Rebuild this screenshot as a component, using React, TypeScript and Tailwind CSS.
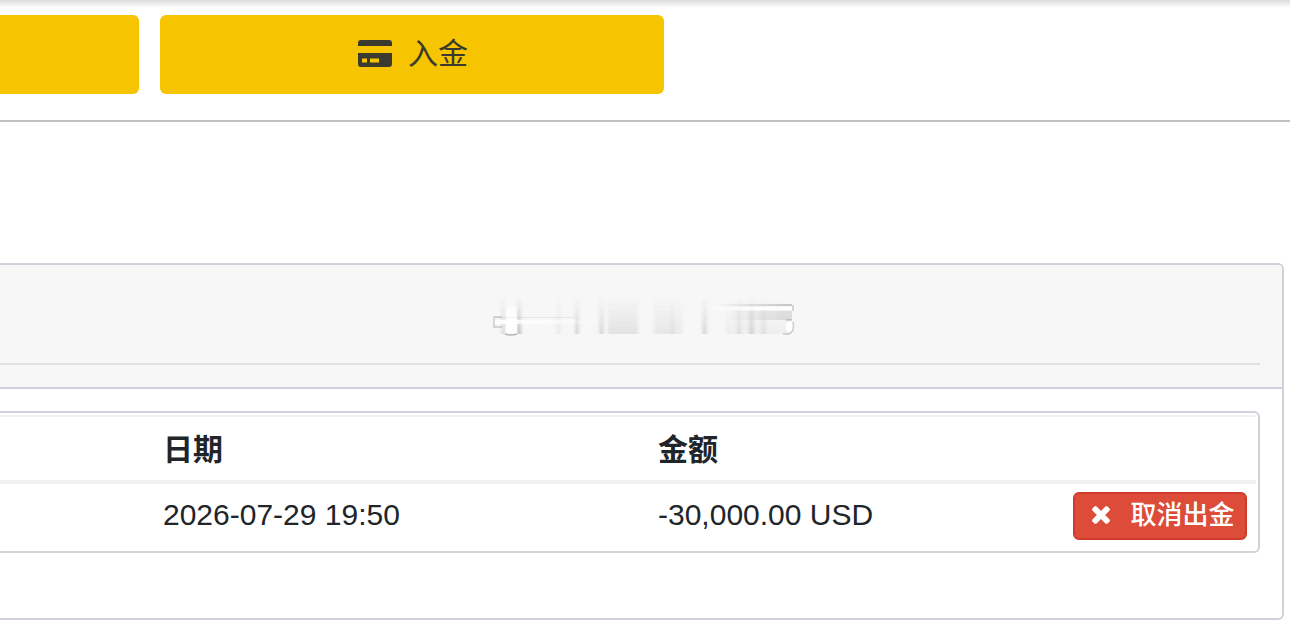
const smudges = [
  { x: 13, w: 4, o: 0.18 },
  { x: 29, w: 4, o: 0.34 },
  { x: 68, w: 5, o: 0.07 },
  { x: 87, w: 4, o: 0.22 },
  { x: 111, w: 5, o: 0.18 },
  { x: 120, w: 30, o: 0.13 },
  { x: 166, w: 20, o: 0.1 },
  { x: 183, w: 11, o: 0.08 },
  { x: 214, w: 5, o: 0.18 },
  { x: 238, w: 62, o: 0.05 },
  { x: 249, w: 4, o: 0.12 },
  { x: 261, w: 5, o: 0.18 },
  { x: 273, w: 5, o: 0.1 },
];

function CardIcon() {
  return (
    <svg className="h-[27px] w-[34px]" viewBox="0 0 34 27" fill="#3b3a2e" aria-hidden="true">
      <path d="M3 0h28a3 3 0 0 1 3 3v3H0V3a3 3 0 0 1 3-3z" />
      <path
        fillRule="evenodd"
        d="M0 13h34v11a3 3 0 0 1-3 3H3a3 3 0 0 1-3-3zM4 18.5v4h5v-4zM12 18.5v4h9v-4z"
      />
    </svg>
  );
}

function CloseIcon() {
  return (
    <svg className="h-[18px] w-[18px]" viewBox="110 366 1188 1188" fill="currentColor" aria-hidden="true">
      <path d="M1298 1322q0 40-28 68l-136 136q-28 28-68 28t-68-28l-294-294-294 294q-28 28-68 28t-68-28l-136-136q-28-28-28-68t28-68l294-294-294-294q-28-28-28-68t28-68l136-136q28-28 68-28t68 28l294 294 294-294q28-28 68-28t68 28l136 136q28 28 28 68t-28 68l-294 294 294 294q28 28 28 68z" />
    </svg>
  );
}

function RedactedTitle() {
  return (
    <svg className="h-[44px] w-[310px]" viewBox="0 0 310 44" aria-hidden="true">
      <defs>
        <linearGradient id="fade" x1="0" y1="0" x2="0" y2="1">
          <stop offset="0" stopColor="#555" stopOpacity="0" />
          <stop offset="0.5" stopColor="#555" stopOpacity="0.5" />
          <stop offset="1" stopColor="#555" stopOpacity="1" />
        </linearGradient>
        <linearGradient id="sweep" x1="0" y1="0" x2="1" y2="0">
          <stop offset="0" stopColor="#fff" stopOpacity="1" />
          <stop offset="1" stopColor="#fff" stopOpacity="0" />
        </linearGradient>
        <linearGradient id="trail" x1="0" y1="0" x2="1" y2="0">
          <stop offset="0" stopColor="#555" stopOpacity="0" />
          <stop offset="1" stopColor="#555" stopOpacity="0.3" />
        </linearGradient>
        <linearGradient id="gleam" x1="0" y1="0" x2="1" y2="0">
          <stop offset="0" stopColor="#fff" stopOpacity="0" />
          <stop offset="0.5" stopColor="#fff" stopOpacity="0.8" />
          <stop offset="1" stopColor="#fff" stopOpacity="1" />
        </linearGradient>
        <filter id="soft" x="-5%" y="-10%" width="110%" height="120%">
          <feGaussianBlur stdDeviation="1.4 0.3" />
        </filter>
        <filter id="edge" x="-20%" y="-20%" width="140%" height="140%">
          <feGaussianBlur stdDeviation="0.5" />
        </filter>
      </defs>
      <g filter="url(#soft)">
        {smudges.map((s) => (
          <rect key={s.x} x={s.x} y="2" width={s.w} height="37" fill="url(#fade)" opacity={s.o} />
        ))}
      </g>
      <g filter="url(#edge)">
        <rect x="6" y="22" width="80" height="1" fill="#777" opacity="0.12" />
        <rect x="6" y="25" width="110" height="4" fill="url(#sweep)" />
        <rect x="18" y="12" width="11" height="27" fill="#fff" opacity="0.6" />
        <rect x="18" y="24" width="11" height="14" fill="#fff" />
        <path d="M14 22H6v10h8" fill="none" stroke="#777" strokeOpacity="0.35" strokeWidth="1.5" />
        <path d="M17 39q6 2 12 0" fill="none" stroke="#777" strokeOpacity="0.5" strokeWidth="1.5" />
        <rect x="230" y="9" width="74" height="2" fill="url(#trail)" />
        <rect x="215" y="12" width="89" height="3" fill="url(#gleam)" />
        <rect x="240" y="16" width="64" height="9" fill="url(#trail)" opacity="0.55" />
        <rect x="298" y="27" width="7" height="9" rx="2" fill="#fff" />
        <path d="M305 10v6M304 25h-6M305 27q2 9-4 12h-6" fill="none" stroke="#777" strokeOpacity="0.35" strokeWidth="1.5" />
      </g>
    </svg>
  );
}

export default function App() {
  return (
    <div
      className="min-h-screen overflow-hidden bg-white text-[#212529]"
      style={{ fontFamily: '"Liberation Sans", "Noto Sans CJK SC", sans-serif' }}
    >
      <div className="h-[8px] bg-linear-to-b from-[#dcdce0] to-white" />
      <div className="flex gap-[21px] border-b-2 border-[#c1c1c1] pt-[7px] pb-[26px]">
        <button type="button" aria-label="操作" className="h-[79px] w-[139px] rounded-r-md bg-[#f6c400]" />
        <button
          type="button"
          className="flex h-[79px] w-[504px] items-center justify-center gap-4 rounded-md bg-[#f6c400] pb-[2px] pl-[2px] text-[30px] text-[#3b3a2e]"
        >
          <CardIcon />
          <span>入金</span>
        </button>
      </div>

      <section className="mt-[141px] mr-[6px] overflow-hidden rounded-r-md border-2 border-l-0 border-[#d2d1db]">
        <header className="border-b-2 border-[#d2d1db] bg-[#f7f7f7] pr-[22px] pb-[22px]">
          <div className="flex justify-center border-b-2 border-[#e1e1e1] pt-[30px] pb-[24px] pl-[26px]">
            <RedactedTitle />
          </div>
        </header>
        <div className="pt-[22px] pr-[22px] pb-[65px]">
          <div className="rounded-r-md border-2 border-l-0 border-[#d2d3da] pt-[2px] pr-[2px]">
            <table className="w-full table-fixed border-collapse text-[30px] leading-9">
              <colgroup>
                <col className="w-[153px]" />
                <col className="w-[495px]" />
                <col className="w-[415px]" />
                <col />
              </colgroup>
              <thead>
                <tr className="h-[66px] border-t-2 border-[#f2f2f4] text-left">
                  <td />
                  <th scope="col" className="px-[10px] pt-[3px] font-bold">日期</th>
                  <th scope="col" className="px-[10px] pt-[3px] font-bold">金额</th>
                  <td />
                </tr>
              </thead>
              <tbody>
                <tr className="h-[69px] border-t-4 border-[#f1f1f2]">
                  <td />
                  <td className="px-[10px] pb-[6px]">2026-07-29 19:50</td>
                  <td className="px-[10px] pb-[6px]">-30,000.00 USD</td>
                  <td className="pr-[9px] pb-[3px]">
                    <button
                      type="button"
                      className="ml-auto flex h-12 w-[174px] items-center justify-center gap-5 rounded-md border-2 border-[#cf3a2a] bg-[#dd4b39] pb-[2px] pl-[7px] text-[26px] font-medium whitespace-nowrap text-white"
                    >
                      <CloseIcon />
                      <span>取消出金</span>
                    </button>
                  </td>
                </tr>
              </tbody>
            </table>
          </div>
        </div>
      </section>
    </div>
  );
}
